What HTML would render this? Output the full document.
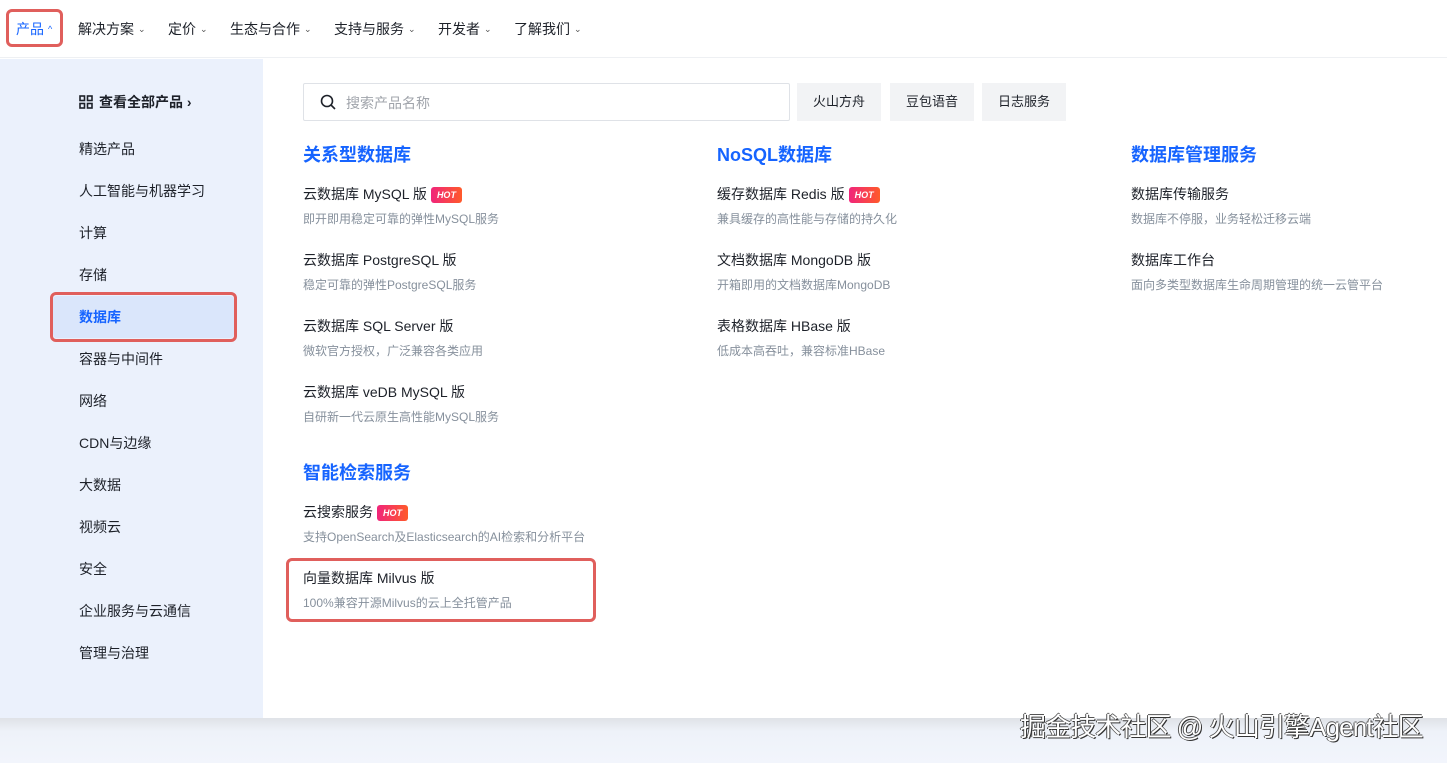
<!DOCTYPE html>
<html><head><meta charset="utf-8"><style>
*{margin:0;padding:0;box-sizing:border-box}
body{width:1447px;height:763px;overflow:hidden;background:#fff;font-family:"Liberation Sans","Noto Sans CJK SC",sans-serif;color:#1d2129;position:relative}
.nav{position:absolute;left:0;top:0;width:1447px;height:58px;border-bottom:1px solid #eef0f3;background:#fff}
.nav span{position:absolute;top:19px;font-size:14px;color:#1d2129}
.nav span i{font-style:normal;font-size:9px;margin-left:4px;color:#555;vertical-align:2px}
.hl{position:absolute;border:3px solid #e05f5c;border-radius:6px}
.side{position:absolute;left:0;top:59px;width:263px;height:659px;background:#ebf1fc}
.side div{position:absolute;left:79px;font-size:14px;color:#1d2129}
.main{position:absolute;left:263px;top:59px;width:1184px;height:659px;background:#fff}
.bottom{position:absolute;left:0;top:718px;width:1447px;height:45px;background:linear-gradient(#dfe2e7,#eef2f9 30%,#f2f5fc)}
.search{position:absolute;left:303px;top:83px;width:487px;height:38px;border:1px solid #dfe2e7;border-radius:2px}
.search span{position:absolute;left:42px;top:9px;font-size:14px;color:#a0a4ab}
.btn{position:absolute;top:83px;height:38px;background:#f2f3f5;font-size:13px;line-height:37px;text-align:center;color:#1d2129}
.h{position:absolute;font-size:18px;font-weight:bold;color:#1664ff}
.t{position:absolute;font-size:14px;color:#1d2129}
.d{position:absolute;font-size:12px;color:#86909c}
.hot{display:inline-block;width:31px;height:16px;border-radius:3px;background:linear-gradient(90deg,#f0257b,#ff5a2a);color:#fff;font-size:9px;font-weight:bold;font-style:italic;text-align:center;line-height:16px;vertical-align:1px;margin-left:4px}
.wm{position:absolute;left:1020px;top:707px;font-size:26px;color:#fff;text-shadow:1px 1px 0 #333,-1px 0 0 #555,0 -1px 0 #555;letter-spacing:-0.9px}
</style></head><body>
<div class="nav">
<span style="left:16px;color:#1664ff">产品<i style="color:#1664ff">^</i></span>
<span style="left:78px">解决方案<i>⌄</i></span>
<span style="left:168px">定价<i>⌄</i></span>
<span style="left:230px">生态与合作<i>⌄</i></span>
<span style="left:334px">支持与服务<i>⌄</i></span>
<span style="left:438px">开发者<i>⌄</i></span>
<span style="left:514px">了解我们<i>⌄</i></span>
</div>
<div class="hl" style="left:6px;top:9px;width:57px;height:38px"></div>
<div class="side">
<div style="top:33px;font-weight:bold"><svg width="14" height="14" viewBox="0 0 14 14" style="vertical-align:-2px;margin-right:6px"><g fill="none" stroke="#1d2129" stroke-width="1.6"><rect x="1" y="1" width="4.5" height="4.5"/><rect x="8.5" y="1" width="4.5" height="4.5"/><rect x="1" y="8.5" width="4.5" height="4.5"/><rect x="8.5" y="8.5" width="4.5" height="4.5"/></g></svg>查看全部产品 ›</div>
<div style="top:80px">精选产品</div>
<div style="top:122px">人工智能与机器学习</div>
<div style="top:164px">计算</div>
<div style="top:206px">存储</div>
<div style="top:237px;left:53px;width:181px;height:42px;background:#dae6fb;border-radius:4px"></div>
<div style="top:248px;color:#1664ff;font-weight:bold">数据库</div>
<div style="top:290px">容器与中间件</div>
<div style="top:332px">网络</div>
<div style="top:374px">CDN与边缘</div>
<div style="top:416px">大数据</div>
<div style="top:458px">视频云</div>
<div style="top:500px">安全</div>
<div style="top:542px">企业服务与云通信</div>
<div style="top:584px">管理与治理</div>
</div>
<div class="hl" style="left:50px;top:292px;width:187px;height:50px"></div>
<div class="main"></div>
<div class="search"><svg width="16" height="16" viewBox="0 0 16 16" style="position:absolute;left:16px;top:10px"><circle cx="7" cy="7" r="5.5" fill="none" stroke="#1d2129" stroke-width="1.6"/><path d="M11 11l4 4" stroke="#1d2129" stroke-width="1.6"/></svg><span>搜索产品名称</span></div>
<div class="btn" style="left:797px;width:84px">火山方舟</div>
<div class="btn" style="left:890px;width:84px">豆包语音</div>
<div class="btn" style="left:982px;width:84px">日志服务</div>
<div class="h" style="left:303px;top:141px">关系型数据库</div>
<div class="h" style="left:717px;top:141px">NoSQL数据库</div>
<div class="h" style="left:1131px;top:141px">数据库管理服务</div>
<div class="t" style="left:303px;top:184px">云数据库 MySQL 版<span class="hot">HOT</span></div>
<div class="d" style="left:303px;top:210px">即开即用稳定可靠的弹性MySQL服务</div>
<div class="t" style="left:303px;top:250px">云数据库 PostgreSQL 版</div>
<div class="d" style="left:303px;top:276px">稳定可靠的弹性PostgreSQL服务</div>
<div class="t" style="left:303px;top:316px">云数据库 SQL Server 版</div>
<div class="d" style="left:303px;top:342px">微软官方授权，广泛兼容各类应用</div>
<div class="t" style="left:303px;top:382px">云数据库 veDB MySQL 版</div>
<div class="d" style="left:303px;top:408px">自研新一代云原生高性能MySQL服务</div>
<div class="h" style="left:303px;top:459px">智能检索服务</div>
<div class="t" style="left:303px;top:502px">云搜索服务<span class="hot">HOT</span></div>
<div class="d" style="left:303px;top:528px">支持OpenSearch及Elasticsearch的AI检索和分析平台</div>
<div class="t" style="left:303px;top:568px">向量数据库 Milvus 版</div>
<div class="d" style="left:303px;top:594px">100%兼容开源Milvus的云上全托管产品</div>
<div class="hl" style="left:286px;top:558px;width:310px;height:64px"></div>
<div class="t" style="left:717px;top:184px">缓存数据库 Redis 版<span class="hot">HOT</span></div>
<div class="d" style="left:717px;top:210px">兼具缓存的高性能与存储的持久化</div>
<div class="t" style="left:717px;top:250px">文档数据库 MongoDB 版</div>
<div class="d" style="left:717px;top:276px">开箱即用的文档数据库MongoDB</div>
<div class="t" style="left:717px;top:316px">表格数据库 HBase 版</div>
<div class="d" style="left:717px;top:342px">低成本高吞吐，兼容标准HBase</div>
<div class="t" style="left:1131px;top:184px">数据库传输服务</div>
<div class="d" style="left:1131px;top:210px">数据库不停服，业务轻松迁移云端</div>
<div class="t" style="left:1131px;top:250px">数据库工作台</div>
<div class="d" style="left:1131px;top:276px">面向多类型数据库生命周期管理的统一云管平台</div>
<div class="bottom"></div>
<div class="wm">掘金技术社区 @ 火山引擎Agent社区</div>
</body></html>
